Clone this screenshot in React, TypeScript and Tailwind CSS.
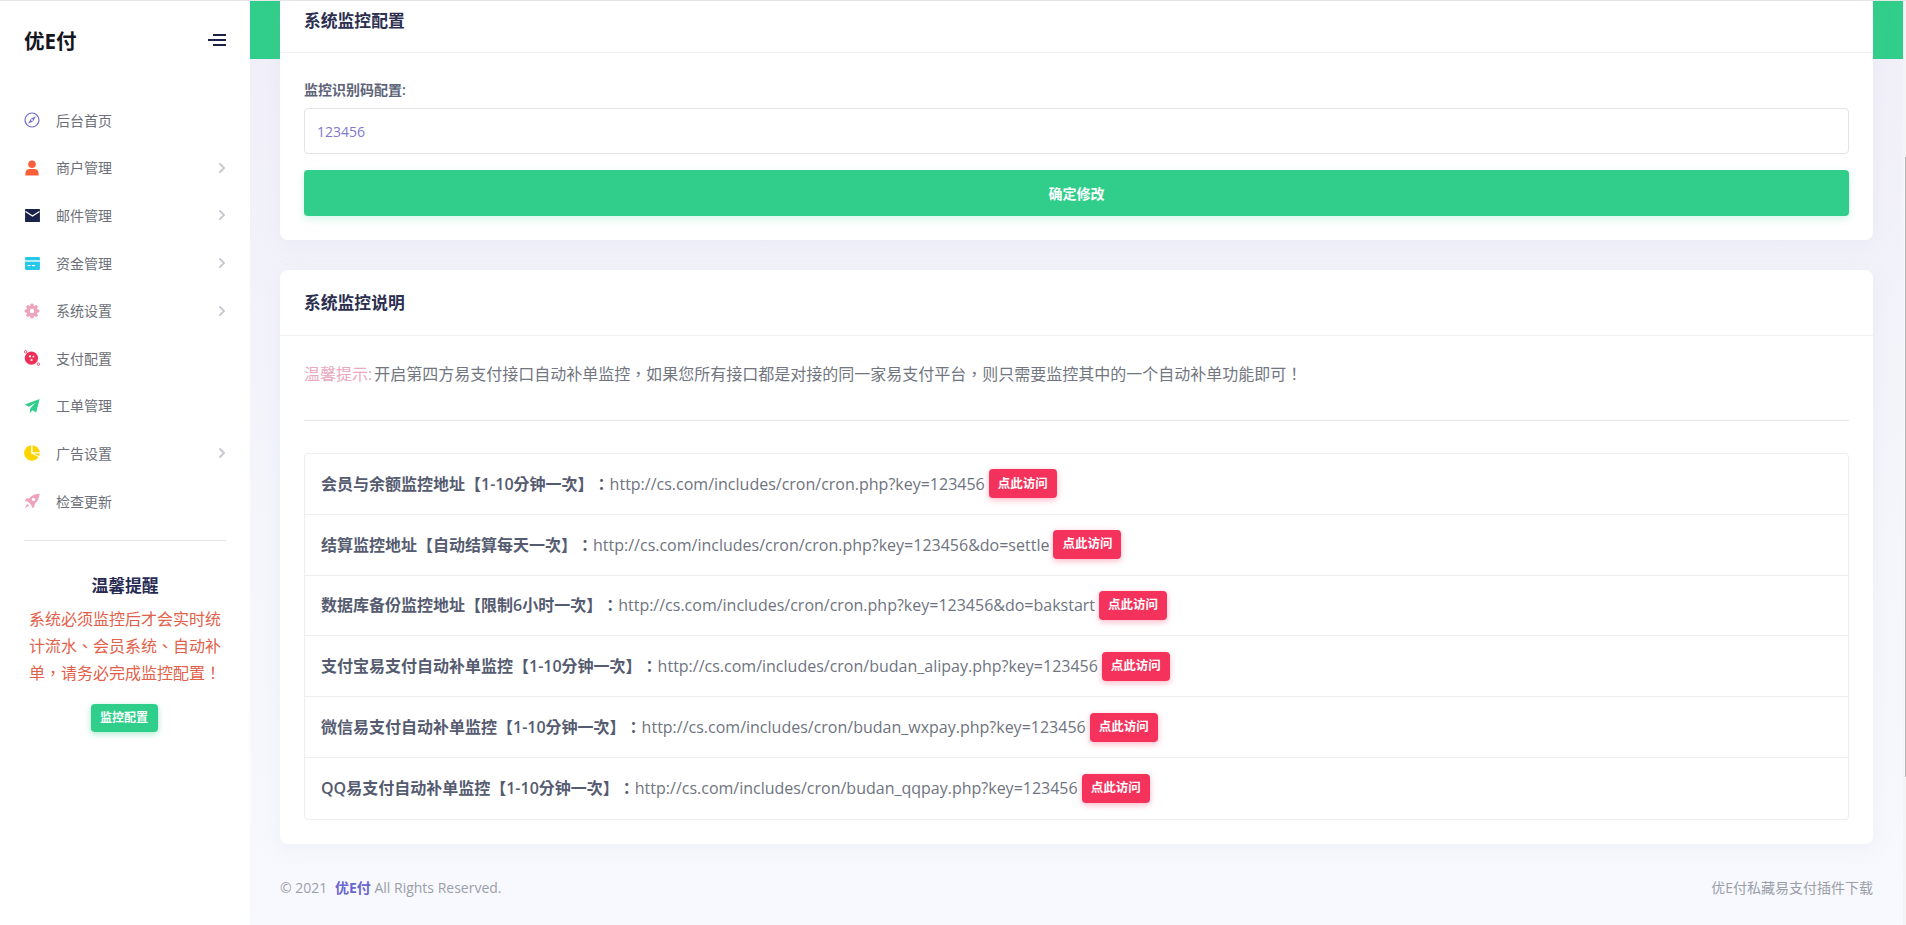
import { ChevronRight } from "lucide-react"

const font = "font-['Open_Sans','Noto_Sans_CJK_SC',sans-serif] [text-spacing-trim:space-all]"
// the TC cut centres ，：！ in their box, as the reference does
const fontTc = "font-['Open_Sans','Noto_Sans_CJK_TC',sans-serif]"

function CompassIcon() {
  return (
    <svg viewBox="0 0 16 16" className="w-4 h-4" fill="none">
      <circle cx="8" cy="8" r="7" stroke="#6f6bd0" strokeWidth="1.2" />
      <path d="M11.8 4.2 9.2 9.2 4.2 11.8 6.8 6.8Z" fill="#6f6bd0" />
      <circle cx="8" cy="8" r="1" fill="#fff" />
    </svg>
  )
}

function UserIcon() {
  return (
    <svg viewBox="0 0 16 16" className="w-4 h-4" fill="#f9603a">
      <circle cx="8" cy="4.2" r="3.8" />
      <path d="M1.4 15.5v-2.4C1.4 10.6 3.5 9 5.6 9h4.8c2.1 0 4.2 1.6 4.2 4.1v2.4Z" />
    </svg>
  )
}

function MailIcon() {
  return (
    <svg viewBox="0 0 16 14" className="w-[15px] h-[13px]">
      <rect width="16" height="14" rx="0.6" fill="#18224a" />
      <path d="M0.5 2.6 8 7.6l7.5-5" fill="none" stroke="#fff" strokeWidth="1.3" />
    </svg>
  )
}

function CardIcon() {
  return (
    <svg viewBox="0 0 16 14" className="w-[15px] h-[13px]">
      <rect width="16" height="14" rx="1.4" fill="#25c8e8" />
      <rect y="3.6" width="16" height="1.4" fill="#fff" />
      <rect x="2.6" y="8.6" width="3.4" height="1.2" fill="#fff" />
      <rect x="7.4" y="8.6" width="3.4" height="1.2" fill="#fff" />
    </svg>
  )
}

function GearIcon() {
  return (
    <svg viewBox="0 0 16 16" className="w-4 h-4">
      <g fill="#eda3bd">
        <circle cx="8" cy="8" r="5.6" />
        <rect x="6.4" y="0.6" width="3.2" height="14.8" rx="1" />
        <rect x="6.4" y="0.6" width="3.2" height="14.8" rx="1" transform="rotate(45 8 8)" />
        <rect x="6.4" y="0.6" width="3.2" height="14.8" rx="1" transform="rotate(90 8 8)" />
        <rect x="6.4" y="0.6" width="3.2" height="14.8" rx="1" transform="rotate(135 8 8)" />
      </g>
      <circle cx="8" cy="8" r="2.2" fill="#fff" />
    </svg>
  )
}

function PlanetIcon() {
  return (
    <svg viewBox="0 0 16 16" className="w-4 h-4">
      <circle cx="7.4" cy="8.2" r="6.6" fill="#ee2f58" />
      <circle cx="1.6" cy="1.8" r="1.2" fill="#fff" stroke="#ee2f58" strokeWidth="0.8" />
      <circle cx="14.4" cy="14.2" r="1.2" fill="#fff" stroke="#ee2f58" strokeWidth="0.8" />
      <circle cx="6" cy="6.4" r="1.1" fill="#fff" />
      <circle cx="9.4" cy="6.6" r="0.9" fill="#fff" />
      <circle cx="7.6" cy="10" r="1.1" fill="#fff" />
    </svg>
  )
}

function PlaneIcon() {
  return (
    <svg viewBox="0 0 16 16" className="w-4 h-4" fill="#2fce8a">
      <path d="M15.6 1 .8 6.6l3.9 2.2L11.4 5 6.4 10.2l-.8 5 2.8-3 3.8 2.2Z" />
    </svg>
  )
}

function PieIcon() {
  return (
    <svg viewBox="0 0 16 16" className="w-4 h-4" fill="#fdd400">
      <path d="M7.2 0.2A7.8 7.8 0 1 0 14.6 12L7.2 8.4Z" />
      <path d="M8.6 0.2A7.8 7.8 0 0 1 15.8 7.2H8.6Z" />
      <path d="M8.9 8.6h7A7.8 7.8 0 0 1 15.2 10.9Z" />
    </svg>
  )
}

function RocketIcon() {
  return (
    <svg viewBox="0 0 16 16" className="w-4 h-4">
      <path d="M15.6 0.4C11.6 0.6 8 2 5.2 5.2L2.2 5.6 0.8 8l3 .6 3.6 3.6.6 3 2.4-1.4.4-3C13.8 8 15.4 4.4 15.6.4Z" fill="#eda3bd" />
      <circle cx="9.6" cy="6.4" r="1.7" fill="#fff" />
      <path d="M3.4 10.8.6 15.4l4.6-2.8Z" fill="#eda3bd" />
    </svg>
  )
}

const menu = [
  { label: "后台首页", icon: <CompassIcon /> },
  { label: "商户管理", icon: <UserIcon />, arrow: true },
  { label: "邮件管理", icon: <MailIcon />, arrow: true },
  { label: "资金管理", icon: <CardIcon />, arrow: true },
  { label: "系统设置", icon: <GearIcon />, arrow: true },
  { label: "支付配置", icon: <PlanetIcon /> },
  { label: "工单管理", icon: <PlaneIcon /> },
  { label: "广告设置", icon: <PieIcon />, arrow: true },
  { label: "检查更新", icon: <RocketIcon /> },
]

const monitors = [
  { title: "会员与余额监控地址【1-10分钟一次】：", url: "http://cs.com/includes/cron/cron.php?key=123456" },
  { title: "结算监控地址【自动结算每天一次】：", url: "http://cs.com/includes/cron/cron.php?key=123456&do=settle" },
  { title: "数据库备份监控地址【限制6小时一次】：", url: "http://cs.com/includes/cron/cron.php?key=123456&do=bakstart" },
  { title: "支付宝易支付自动补单监控【1-10分钟一次】：", url: "http://cs.com/includes/cron/budan_alipay.php?key=123456" },
  { title: "微信易支付自动补单监控【1-10分钟一次】：", url: "http://cs.com/includes/cron/budan_wxpay.php?key=123456" },
  { title: "QQ易支付自动补单监控【1-10分钟一次】：", url: "http://cs.com/includes/cron/budan_qqpay.php?key=123456" },
]

function Sidebar() {
  return (
    <aside className="w-[250px] shrink-0 bg-white px-6 flex flex-col z-10">
      <div className="flex items-center justify-between h-[78px]">
        <span className="pt-[2px] text-[20.5px] font-bold text-[#16161e]">优E付</span>
        <svg viewBox="0 0 18 12" className="w-[18px] h-3" stroke="#1c2148" strokeWidth="1.8">
          <path d="M5 1h13M0 6h18M5 11h13" />
        </svg>
      </div>
      <nav className="mt-[17.5px]">
        {menu.map((item) => (
          <div key={item.label} className="flex items-center h-[47.6px] text-[14px] text-[#6c6f78]">
            <span className="w-4 flex justify-center">{item.icon}</span>
            <span className="ml-[16px] flex-1">{item.label}</span>
            {item.arrow && <ChevronRight className="w-4 h-4 text-[#c8cad0] mr-[-4px]" strokeWidth={3} />}
          </div>
        ))}
      </nav>
      <div className="mt-[15px] border-t border-[#e4e4e8]" />
      <div className="mt-[32px] text-center">
        <h4 className="text-[16.8px] leading-[26px] font-bold text-[#272b52]">温馨提醒</h4>
        <p className={"mt-[7px] text-[16px] leading-[27px] text-[#e2614a] " + fontTc}>
          系统必须监控后才会实时统计流水、会员系统、自动补单，请务必完成监控配置！
        </p>
        <button className="mt-[17px] mr-[2px] h-7 w-[67px] rounded bg-[#2fce8a] text-[12px] font-bold text-white shadow-[0_2px_6px_rgba(47,206,138,0.4)]">
          监控配置
        </button>
      </div>
    </aside>
  )
}

function CardHeader({ title, className }: { title: string; className: string }) {
  return (
    <div className={"px-6 border-b border-[#f0f0f3] " + className}>
      <h4 className="text-[16.8px] font-bold text-[#2c2f4f]">{title}</h4>
    </div>
  )
}

export default function App() {
  return (
    <div className={"h-[925px] overflow-hidden flex flex-col bg-white " + font}>
      <div className="h-px bg-[#e6e6e6]" />
      <div className="flex flex-1 min-h-0">
        <Sidebar />
        <main className="flex-1 min-w-0 relative bg-linear-to-b from-[#f0eff8] to-[#f8f9fe] px-[30px]">
          <div className="absolute top-0 inset-x-0 h-[58px] bg-[#30ce8a]" />
          <div className="relative">
            <section className="bg-white rounded-b-lg shadow-[0_4px_20px_rgba(180,180,210,0.1)]">
              <CardHeader title="系统监控配置" className="h-[52px] pt-[7px]" />
              <div className="px-6 pt-[26px] pb-6">
                <label className="block text-[14px] leading-[21px] font-semibold text-[#5d6478]">监控识别码配置:</label>
                <input
                  readOnly
                  value="123456"
                  className="mt-[8px] w-full h-[46px] px-3 rounded border border-[#e2e3e6] bg-white text-[14px] text-[#8079cd] outline-none"
                />
                <button className="mt-4 w-full h-[46px] rounded bg-[#30ce8a] text-[14px] font-bold text-white shadow-[0_3px_8px_rgba(47,206,138,0.2)]">
                  确定修改
                </button>
              </div>
            </section>

            <section className="mt-[30px] bg-white rounded-lg shadow-[0_4px_20px_rgba(180,180,210,0.1)]">
              <CardHeader title="系统监控说明" className="h-[66px] pt-[20px]" />
              <div className="px-6 pt-[26px] pb-6">
                <p className={"text-[16px] leading-[24px] text-[#72767f] " + fontTc}>
                  <span className="mr-[2px] text-[#e9a8be]">温馨提示:</span>
                  开启第四方易支付接口自动补单监控，如果您所有接口都是对接的同一家易支付平台，则只需要监控其中的一个自动补单功能即可！
                </p>
                <hr className="mt-[34px] mb-[32px] border-[#e6e6ea]" />
                <ul className="border border-[#eeeef1] rounded divide-y divide-[#eeeef1]">
                  {monitors.map((m) => (
                    <li key={m.title} className="h-[60.8px] px-4 flex items-center text-[16px] text-[#6f7480]">
                      <b className={"font-semibold text-[#555b70] " + fontTc}>{m.title}</b>
                      {m.url}
                      <span className="ml-1 inline-flex items-center justify-center w-[68px] h-[29px] rounded bg-[#f5325c] text-[12.5px] font-bold text-white shadow-[0_2px_6px_rgba(245,50,92,0.35)]">
                        点此访问
                      </span>
                    </li>
                  ))}
                </ul>
              </div>
            </section>

            <footer className="mt-[33px] flex justify-between text-[14px] text-[#9a9ea9]">
              <p>
                © 2021 <b className="ml-1 font-bold text-[#6a66cf]">优E付</b> All Rights Reserved.
              </p>
              <span>优E付私藏易支付插件下载</span>
            </footer>
          </div>
        </main>
        <div className="w-[3px] bg-[#f4f4f6] flex justify-end">
          <div className="mt-[156px] w-px h-[620px] bg-[#b8b8bc]" />
        </div>
      </div>
    </div>
  )
}
